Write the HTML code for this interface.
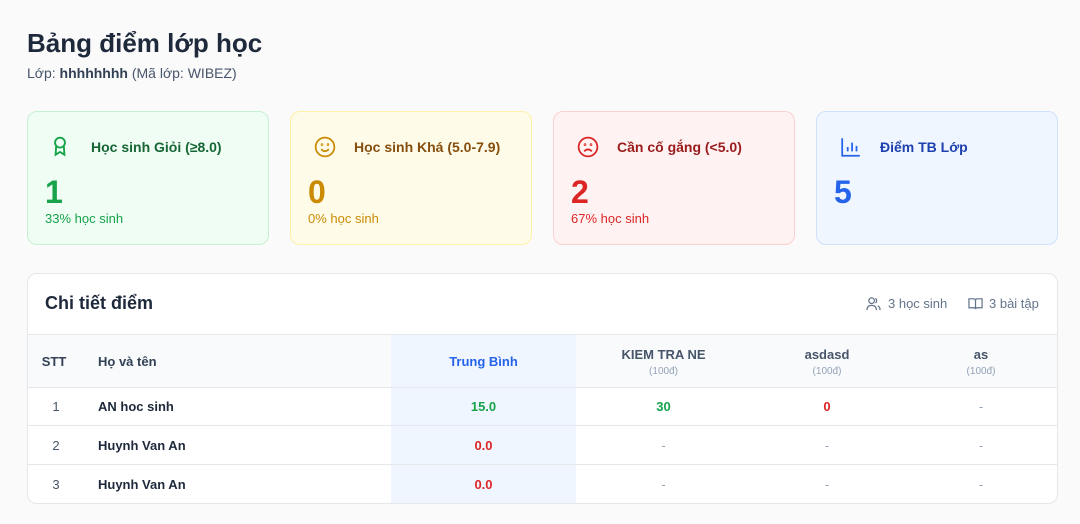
<!DOCTYPE html>
<html><head><meta charset="utf-8"><style>
*{box-sizing:border-box;margin:0;padding:0}
body{width:1080px;height:524px;background:#fafafa;font-family:"Liberation Sans",sans-serif;color:#1f2937;position:relative;overflow:hidden}
.a{position:absolute}
h1{position:absolute;left:27px;top:28px;font-size:26px;font-weight:700;color:#1e293b}
.sub{left:27px;top:65px;font-size:14px;color:#475569}
.card{position:absolute;top:111px;width:242px;height:134px;border-radius:10px;border:1px solid}
.card .t{position:absolute;left:63px;top:27px;font-size:14px;font-weight:700}
.card svg{position:absolute;left:23px;top:24px}
.card .n{position:absolute;left:17px;top:62px;font-size:32px;font-weight:700}
.card .p{position:absolute;left:17px;top:99px;font-size:13px}
.tbl{position:absolute;left:27px;top:273px;width:1031px;height:231px;background:#fff;border:1px solid #e5e7eb;border-radius:10px;overflow:hidden}
.th{position:absolute;top:60px;left:0;width:100%;height:54px;background:#f8fafc;border-top:1px solid #e5e7eb;border-bottom:1px solid #e5e7eb}
.row{position:absolute;left:0;width:100%;height:39px;border-bottom:1px solid #e5e7eb}
.c{position:absolute;text-align:center;font-size:13px}
</style></head><body>
<h1>Bảng điểm lớp học</h1>
<div class="a sub">Lớp: <b style="color:#334155">hhhhhhhh</b> (Mã lớp: WIBEZ)</div>

<div class="card" style="left:27px;background:#effdf4;border-color:#c6f0d4">
<svg width="18" height="22" viewBox="0 0 16 20" fill="none" stroke="#16a34a" stroke-width="1.7"><circle cx="8" cy="6" r="4.5"/><path d="M4.5 9.5 L4 17 L8 14.5 L12 17 L11.5 9.5"/></svg>
<div class="t" style="color:#166534">Học sinh Giỏi (≥8.0)</div>
<div class="n" style="color:#16a34a">1</div><div class="p" style="color:#16a34a">33% học sinh</div></div>

<div class="card" style="left:290px;background:#fefce8;border-color:#fdf0a8">
<svg width="22" height="22" viewBox="0 0 20 20" fill="none" stroke="#ca8a04" stroke-width="1.6"><circle cx="10" cy="10" r="8.5"/><path d="M6.5 12 Q10 15.5 13.5 12"/><circle cx="7.3" cy="7.8" r=".4"/><circle cx="12.7" cy="7.8" r=".4"/></svg>
<div class="t" style="color:#854d0e">Học sinh Khá (5.0-7.9)</div>
<div class="n" style="color:#ca8a04">0</div><div class="p" style="color:#ca8a04">0% học sinh</div></div>

<div class="card" style="left:553px;background:#fef2f2;border-color:#fbd0d0">
<svg width="22" height="22" viewBox="0 0 20 20" fill="none" stroke="#dc2626" stroke-width="1.6"><circle cx="10" cy="10" r="8.5"/><path d="M6.5 14 Q10 10.5 13.5 14"/><circle cx="7.3" cy="7.8" r=".4"/><circle cx="12.7" cy="7.8" r=".4"/></svg>
<div class="t" style="color:#991b1b">Cần cố gắng (&lt;5.0)</div>
<div class="n" style="color:#dc2626">2</div><div class="p" style="color:#dc2626">67% học sinh</div></div>

<div class="card" style="left:816px;background:#eff6ff;border-color:#cfe1fb">
<svg width="22" height="22" viewBox="0 0 20 20" fill="none" stroke="#2563eb" stroke-width="1.6"><path d="M2 2 V18 H18 M7 14 V10 M11 14 V6 M15 14 V9"/></svg>
<div class="t" style="color:#1e40af">Điểm TB Lớp</div>
<div class="n" style="color:#2563eb">5</div></div>

<div class="tbl">
<div class="a" style="left:17px;top:19px;font-size:18px;font-weight:700;color:#1e293b">Chi tiết điểm</div>
<svg class="a" style="left:838px;top:22px" width="15" height="15" viewBox="0 0 16 16" fill="none" stroke="#64748b" stroke-width="1.3"><circle cx="6" cy="5" r="3"/><path d="M1 15 Q1 10 6 10 Q11 10 11 15 M10 2.5 A3 3 0 0 1 10 7.5 M12.5 10.5 Q15 11.5 15 15"/></svg>
<div class="a" style="left:860px;top:22px;font-size:13px;color:#64748b">3 học sinh</div>
<svg class="a" style="left:940px;top:22px" width="15" height="15" viewBox="0 0 16 16" fill="none" stroke="#64748b" stroke-width="1.3"><path d="M1 3 H6 Q8 3 8 5 V14 Q8 12.5 6 12.5 H1 Z M15 3 H10 Q8 3 8 5 V14 Q8 12.5 10 12.5 H15 Z"/></svg>
<div class="a" style="left:961px;top:22px;font-size:13px;color:#64748b">3 bài tập</div>
<div class="a" style="left:363px;top:60px;width:185px;height:171px;background:#eff6ff"></div>
<div class="th" style="background:transparent"></div>
<div class="a" style="left:0;top:61px;width:363px;height:52px;background:#f8fafc"></div>
<div class="a" style="left:548px;top:61px;width:483px;height:52px;background:#f8fafc"></div>
<div class="c" style="left:0;width:52px;top:80px;font-weight:700;color:#334155">STT</div>
<div class="c" style="left:70px;top:80px;font-weight:700;color:#334155;text-align:left">Họ và tên</div>
<div class="c" style="left:363px;width:185px;top:80px;font-weight:700;color:#2563eb">Trung Bình</div>
<div class="c" style="left:548px;width:175px;top:73px;font-weight:700;color:#475569">KIEM TRA NE<br><span style="font-size:10px;font-weight:400;color:#94a3b8">(100đ)</span></div>
<div class="c" style="left:723px;width:152px;top:73px;font-weight:700;color:#475569">asdasd<br><span style="font-size:10px;font-weight:400;color:#94a3b8">(100đ)</span></div>
<div class="c" style="left:875px;width:156px;top:73px;font-weight:700;color:#475569">as<br><span style="font-size:10px;font-weight:400;color:#94a3b8">(100đ)</span></div>
<div class="row" style="top:113px"></div><div class="row" style="top:152px"></div>
<div class="c" style="left:0;width:56px;top:125px;color:#475569">1</div>
<div class="c" style="left:70px;top:125px;font-weight:700;color:#1e293b">AN hoc sinh</div>
<div class="c" style="left:363px;width:185px;top:125px;font-weight:700;color:#16a34a">15.0</div>
<div class="c" style="left:548px;width:175px;top:125px;font-weight:700;color:#16a34a">30</div>
<div class="c" style="left:723px;width:152px;top:125px;font-weight:700;color:#dc2626">0</div>
<div class="c" style="left:875px;width:156px;top:125px;color:#94a3b8">-</div>
<div class="c" style="left:0;width:56px;top:164px;color:#475569">2</div>
<div class="c" style="left:70px;top:164px;font-weight:700;color:#1e293b">Huynh Van An</div>
<div class="c" style="left:363px;width:185px;top:164px;font-weight:700;color:#dc2626">0.0</div>
<div class="c" style="left:548px;width:175px;top:164px;color:#94a3b8">-</div>
<div class="c" style="left:723px;width:152px;top:164px;color:#94a3b8">-</div>
<div class="c" style="left:875px;width:156px;top:164px;color:#94a3b8">-</div>
<div class="c" style="left:0;width:56px;top:203px;color:#475569">3</div>
<div class="c" style="left:70px;top:203px;font-weight:700;color:#1e293b">Huynh Van An</div>
<div class="c" style="left:363px;width:185px;top:203px;font-weight:700;color:#dc2626">0.0</div>
<div class="c" style="left:548px;width:175px;top:203px;color:#94a3b8">-</div>
<div class="c" style="left:723px;width:152px;top:203px;color:#94a3b8">-</div>
<div class="c" style="left:875px;width:156px;top:203px;color:#94a3b8">-</div>
</div>
</body></html>
